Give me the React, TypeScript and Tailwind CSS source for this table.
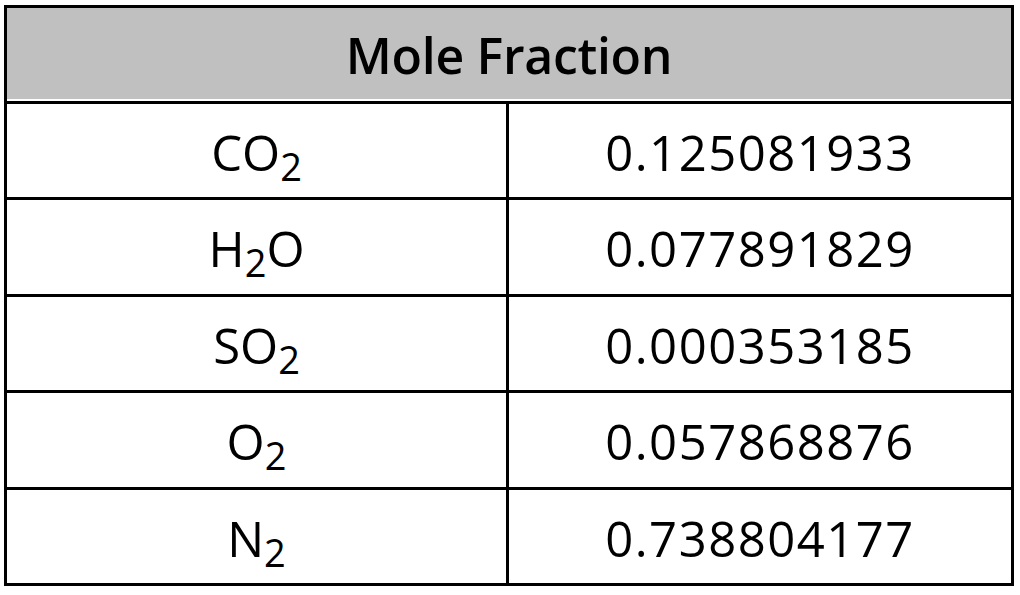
import React from 'react';

type Row = { base: string; sub: string; tail?: string; value: string };

const rows: Row[] = [
  { base: 'CO', sub: '2', value: '0.125081933' },
  { base: 'H', sub: '2', tail: 'O', value: '0.077891829' },
  { base: 'SO', sub: '2', value: '0.000353185' },
  { base: 'O', sub: '2', value: '0.057868876' },
  { base: 'N', sub: '2', value: '0.738804177' },
];

const Formula: React.FC<{ row: Row }> = ({ row }) => (
  <span>
    {row.base}
    <span className="relative top-[10px] text-[38px] leading-none">{row.sub}</span>
    {row.tail}
  </span>
);

const App: React.FC = () => {
  return (
    <div className="w-[1020px] h-[595px] bg-white pt-[5px] pl-[4px]" style={{ fontFamily: '"Open Sans", sans-serif' }}>
      <div className="w-[1010px] border-[3px] border-black bg-white text-black">
        {/* Header */}
        <div className="h-[93px] bg-[#c0c0c0] border-b-2 border-white flex items-center justify-center pt-[4px]">
          <span className="text-[50px] font-semibold tracking-[-0.3px]">Mole Fraction</span>
        </div>
        {rows.map((row) => (
          <div key={row.value} className="grid grid-cols-2 border-t-[3px] border-black h-[96.4px]">
            <div className="flex items-center justify-center text-[49px] border-r-[3px] border-black pt-[4px]">
              <Formula row={row} />
            </div>
            <div className="flex items-center justify-center text-[49px] tracking-[1.5px] pt-[4px]">
              {row.value}
            </div>
          </div>
        ))}
      </div>
    </div>
  );
};

export default App;
